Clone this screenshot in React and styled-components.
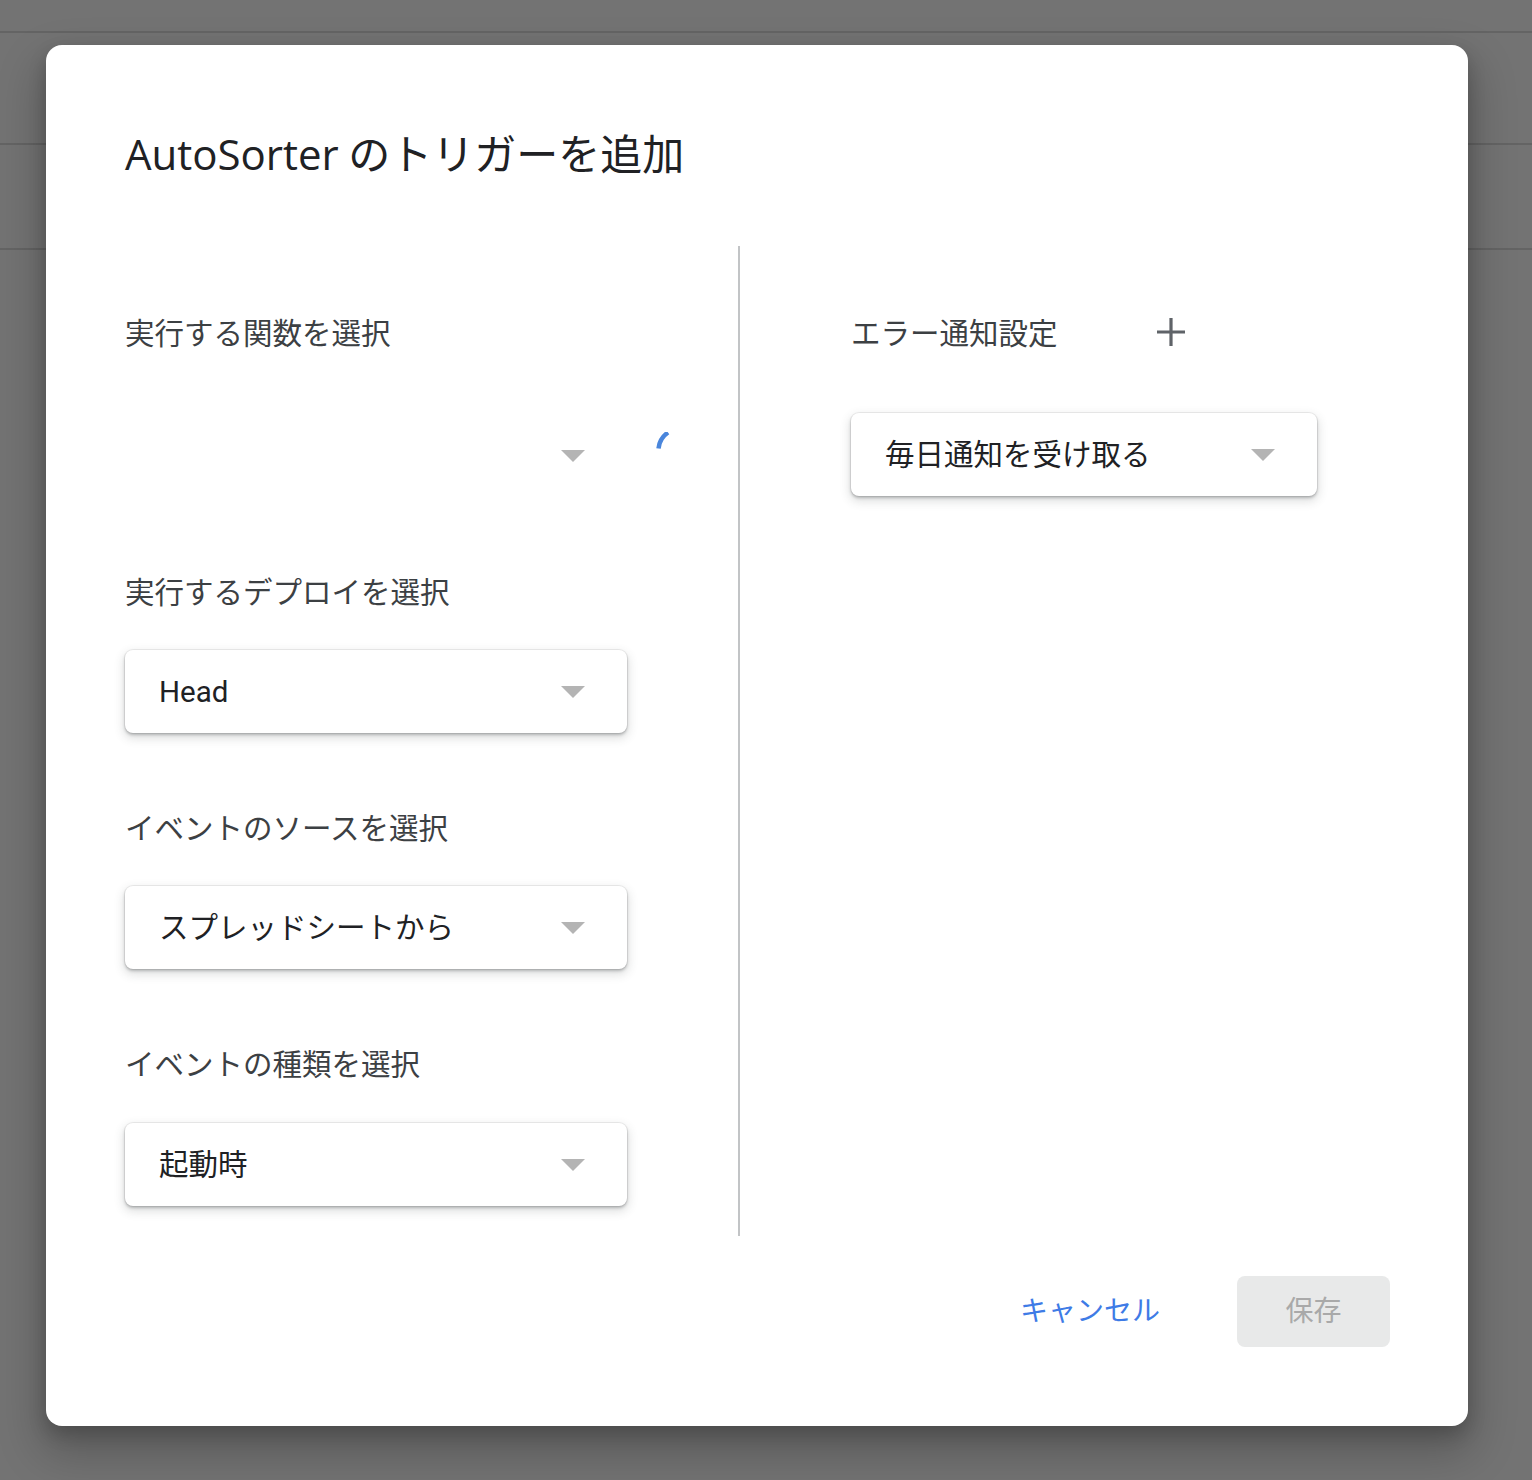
import React from "react";
import styled, { createGlobalStyle } from "styled-components";

const Global = createGlobalStyle`
  html, body { margin: 0; padding: 0; }
  body {
    width: 1532px;
    height: 1480px;
    overflow: hidden;
    background: #737373;
    font-family: Roboto, "Noto Sans CJK JP", sans-serif;
  }
`;

const Page = styled.div`
  position: relative;
  width: 1532px;
  height: 1480px;
  background: #737373;
`;

const PageBand = styled.div`
  height: ${(p) => p.$h}px;
  border-bottom: 2px solid #646464;
`;

const Overlay = styled.div`
  position: absolute;
  inset: 0;
  padding: 45px 0 0 46px;
`;

const Dialog = styled.div`
  width: 1422px;
  height: 1381px;
  box-sizing: border-box;
  background: #fff;
  border-radius: 16px;
  padding: 0 78px 0 79px;
  display: flex;
  flex-direction: column;
  box-shadow: 0 22px 44px 6px rgba(0, 0, 0, 0.22), 0 8px 18px rgba(0, 0, 0, 0.18);
`;

const Title = styled.h1`
  margin: 79px 0 0;
  height: 56px;
  font-family: "Noto Sans CJK JP", sans-serif;
  font-weight: 400;
  font-size: 42px;
  line-height: 56px;
  color: #202124;
`;

const TitleName = styled.span`
  font-family: "Open Sans", sans-serif;
  font-weight: 500;
`;

const Body = styled.div`
  margin-top: 66px;
  display: grid;
  grid-template-columns: 613px 2px 1fr;
  height: 990px;
`;

const Column = styled.div`
  padding-top: 65px;
  padding-left: ${(p) => p.$pl || 0}px;
  display: flex;
  flex-direction: column;
`;

const Divider = styled.div`
  background: #c2c4c6;
`;

const Field = styled.div`
  display: flex;
  flex-direction: column;
  gap: ${(p) => p.$gap}px;
  margin-bottom: 73px;
  &:last-child {
    margin-bottom: 0;
  }
`;

const LabelRow = styled.div`
  display: flex;
  align-items: center;
`;

const Label = styled.div`
  font-family: "Noto Sans CJK JP", sans-serif;
  font-size: 29.5px;
  line-height: 40px;
  color: #3c4043;
  width: ${(p) => (p.$w ? `${p.$w}px` : "auto")};
`;

const AddButton = styled.button`
  border: none;
  background: none;
  padding: 0;
  width: 32px;
  height: 32px;
  margin-top: 2px;
  margin-left: -1px;
  display: flex;
  align-items: center;
  justify-content: center;
  cursor: pointer;
`;

const SelectRow = styled.div`
  display: flex;
  align-items: center;
  gap: 29px;
`;

const Select = styled.div`
  width: ${(p) => p.$w}px;
  height: 83px;
  box-sizing: border-box;
  border-radius: 8px;
  background: #fff;
  display: flex;
  align-items: center;
  justify-content: space-between;
  padding: 0 42px 0 34px;
  box-shadow: ${(p) =>
    p.$plain
      ? "none"
      : "0 0 0 1px rgba(60,64,67,0.08), 0 2px 3px rgba(60,64,67,0.3), 0 4px 10px 2px rgba(60,64,67,0.15)"};
`;

const SelectText = styled.span`
  font-family: Roboto, "Noto Sans CJK JP", sans-serif;
  font-size: 29.5px;
  line-height: 40px;
  color: #202124;
`;

const Caret = styled.span`
  width: 0;
  height: 0;
  border-left: 12px solid transparent;
  border-right: 12px solid transparent;
  border-top: 12px solid #b4b4b4;
`;

const Footer = styled.div`
  margin-top: 40px;
  display: flex;
  justify-content: flex-end;
  align-items: center;
`;

const TextButton = styled.button`
  border: none;
  background: none;
  padding: 0 24px 5px;
  height: 71px;
  margin-right: 53px;
  font-family: "Noto Sans CJK JP", sans-serif;
  font-size: 28px;
  color: #3e7be6;
  cursor: pointer;
`;

const SaveButton = styled.button`
  border: none;
  width: 153px;
  height: 71px;
  padding: 0 0 5px;
  border-radius: 8px;
  background: #e8e9e9;
  font-family: "Noto Sans CJK JP", sans-serif;
  font-size: 28px;
  color: #a9a9a9;
`;

const Spinner = () => (
  <svg width="48" height="48" viewBox="0 0 48 48">
    <path
      d="M2.5 16.5 A22 22 0 0 1 12 0.5"
      fill="none"
      stroke="#4a86dc"
      strokeWidth="4.5"
      strokeLinecap="butt"
    />
  </svg>
);

const Plus = () => (
  <svg width="30" height="30" viewBox="0 0 30 30">
    <path d="M15 1v28M1 15h28" stroke="#5f6368" strokeWidth="3.2" />
  </svg>
);

const DropDown = ({ children, w = 502, plain }) => (
  <Select $w={w} $plain={plain}>
    <SelectText>{children}</SelectText>
    <Caret />
  </Select>
);

export default function App() {
  return (
    <>
      <Global />
      <Page>
        <PageBand $h={31} />
        <PageBand $h={110} />
        <PageBand $h={103} />
        <Overlay>
          <Dialog>
            <Title>
              <TitleName>AutoSorter</TitleName> のトリガーを追加
            </Title>
            <Body>
              <Column>
                <Field $gap={63}>
                  <Label>実行する関数を選択</Label>
                  <SelectRow>
                    <DropDown plain>{""}</DropDown>
                    <Spinner />
                  </SelectRow>
                </Field>
                <Field $gap={40}>
                  <Label>実行するデプロイを選択</Label>
                  <DropDown>Head</DropDown>
                </Field>
                <Field $gap={40}>
                  <Label>イベントのソースを選択</Label>
                  <DropDown>スプレッドシートから</DropDown>
                </Field>
                <Field $gap={41}>
                  <Label>イベントの種類を選択</Label>
                  <DropDown>起動時</DropDown>
                </Field>
              </Column>
              <Divider />
              <Column $pl={111}>
                <Field $gap={62}>
                  <LabelRow>
                    <Label $w={305}>エラー通知設定</Label>
                    <AddButton aria-label="追加">
                      <Plus />
                    </AddButton>
                  </LabelRow>
                  <DropDown w={466}>毎日通知を受け取る</DropDown>
                </Field>
              </Column>
            </Body>
            <Footer>
              <TextButton>キャンセル</TextButton>
              <SaveButton disabled>保存</SaveButton>
            </Footer>
          </Dialog>
        </Overlay>
      </Page>
    </>
  );
}
